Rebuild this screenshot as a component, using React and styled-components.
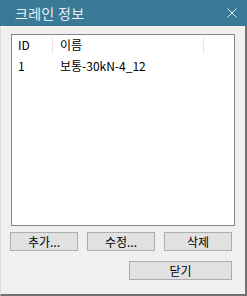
import React from 'react';
import styled, { createGlobalStyle } from 'styled-components';

const Global = createGlobalStyle`
  html, body { margin: 0; padding: 0; background: #f0f0f0; }
  body { font-family: "Noto Sans CJK KR", "Noto Sans", sans-serif; }
`;

const Window = styled.div`
  width: 247px;
  height: 296px;
  box-sizing: border-box;
  display: flex;
  flex-direction: column;
  background: #f0f0f0;
  border-left: 1px solid #dcdcdc;
  border-right: 2px solid #707070;
  border-bottom: 2px solid #707070;
`;

const TitleBar = styled.div`
  height: 26px;
  flex: none;
  display: flex;
  align-items: center;
  justify-content: space-between;
  background: #3a7a96;
  margin-left: -1px;
  margin-right: -2px;
  padding: 0 10px 0 15px;
  color: #e8eff3;
  font-size: 14px;
`;

const Title = styled.span`
  line-height: 26px;
  letter-spacing: 0.3px;
`;

const Body = styled.div`
  flex: 1;
  display: flex;
  flex-direction: column;
  padding: 8px 10px 0 10px;
`;

const ListBox = styled.div`
  height: 192px;
  width: 224px;
  box-sizing: border-box;
  background: #fff;
  border: 1px solid #828790;
  display: flex;
  flex-direction: column;
`;

const HeaderRow = styled.div`
  display: flex;
  height: 21px;
  padding-top: 2px;
  box-sizing: border-box;
  align-items: flex-start;
`;

const HeaderCell = styled.div`
  width: ${p => p.w}px;
  height: 17px;
  line-height: 16px;
  padding-left: ${p => p.pl}px;
  box-sizing: border-box;
  border-right: ${p => (p.last ? 'none' : '1px solid #e5e5e5')};
  font-size: 12px;
  color: #000;
`;

const Row = styled.div`
  display: flex;
  height: 20px;
  line-height: 20px;
  font-size: 12px;
  color: #000;
`;

const Cell = styled.div`
  width: ${p => p.w}px;
  padding-left: ${p => p.pl}px;
  box-sizing: border-box;
  white-space: nowrap;
`;

const ButtonRow = styled.div`
  display: flex;
  justify-content: ${p => (p.end ? 'flex-end' : 'space-between')};
  width: 222px;
  margin-left: -1px;
  margin-top: ${p => p.mt}px;
`;

const Button = styled.button`
  width: ${p => p.w}px;
  height: 19px;
  box-sizing: border-box;
  background: #e1e1e1;
  border: 1px solid #adadad;
  padding: 0;
  font-family: "Noto Sans CJK KR", "Noto Sans", sans-serif;
  font-size: 12px;
  line-height: 16px;
  color: #000;
`;

const CloseIcon = () => (
  <svg width="10" height="10" viewBox="0 0 10 10">
    <path d="M0.5 0.5 L9.5 9.5 M9.5 0.5 L0.5 9.5" stroke="#e8eff3" strokeWidth="1" />
  </svg>
);

export default function App() {
  return (
    <>
      <Global />
      <Window>
        <TitleBar>
          <Title>크레인 정보</Title>
          <CloseIcon />
        </TitleBar>
        <Body>
          <ListBox>
            <HeaderRow>
              <HeaderCell w={41} pl={6}>ID</HeaderCell>
              <HeaderCell w={151} pl={7}>이름</HeaderCell>
              <HeaderCell w={30} last>{''}</HeaderCell>
            </HeaderRow>
            <Row>
              <Cell w={41} pl={6}>1</Cell>
              <Cell w={151} pl={7}>보통-30kN-4_12</Cell>
            </Row>
          </ListBox>
          <ButtonRow mt={6}>
            <Button w={68}>추가...</Button>
            <Button w={68}>수정...</Button>
            <Button w={68}>삭제</Button>
          </ButtonRow>
          <ButtonRow end mt={10}>
            <Button w={103}>닫기</Button>
          </ButtonRow>
        </Body>
      </Window>
    </>
  );
}
